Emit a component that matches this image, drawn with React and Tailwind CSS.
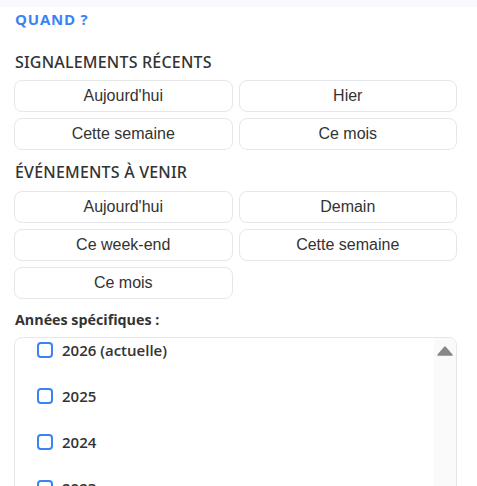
import React from 'react';

const recent = ["Aujourd'hui", 'Hier', 'Cette semaine', 'Ce mois'];
const upcoming = ["Aujourd'hui", 'Demain', 'Ce week-end', 'Cette semaine', 'Ce mois'];
const years = ['2026 (actuelle)', '2025', '2024', '2023', '2022'];

function ChipGrid({ items }) {
  return (
    <div className="grid grid-cols-2 gap-[6px]">
      {items.map((label, i) => (
        <button
          key={i}
          className="h-[32px] rounded-lg border border-[#e5e7eb] bg-white text-[16px] text-[#333] font-['Liberation_Sans',Arial,sans-serif]"
        >
          {label}
        </button>
      ))}
    </div>
  );
}

export default function App() {
  return (
    <div className="w-[477px] h-[486px] overflow-hidden bg-white text-[#333] font-['Open_Sans',sans-serif]">
      <div className="h-[7px] bg-[#f8f9fc]" />
      <div className="pl-[14px] pr-[20px]">
        <div className="mt-[2px] h-[20px] leading-[20px] pl-px text-[15px] font-bold text-[#3b82f6] tracking-[0.8px]">
          QUAND ?
        </div>

        <h3 className="mt-[22px] h-[22px] leading-[22px] pl-px text-[16px] font-medium tracking-[0.2px] font-['Noto_Sans',sans-serif]">
          SIGNALEMENTS RÉCENTS
        </h3>
        <div className="mt-[7px]">
          <ChipGrid items={recent} />
        </div>

        <h3 className="mt-[11px] h-[22px] leading-[22px] pl-px text-[16px] font-medium tracking-[0.2px] font-['Noto_Sans',sans-serif]">
          ÉVÉNEMENTS À VENIR
        </h3>
        <div className="mt-[8px]">
          <ChipGrid items={upcoming} />
        </div>

        <div className="mt-[11px] h-[20px] leading-[20px] pl-px text-[14.3px] font-bold">
          Années spécifiques :
        </div>

        <div className="mt-[7px] h-[200px] flex rounded-t-lg border border-[#e5e7eb] overflow-hidden">
          <div className="flex-1 flex flex-col gap-[30px] pt-[4px] pl-[22px]">
            {years.map((y) => (
              <label key={y} className="flex items-center gap-[9px] h-[16px]">
                <span className="w-[16px] h-[16px] rounded-[4px] border-2 border-[#3b82f6] bg-white" />
                <span className="text-[15px] font-semibold text-[#333] leading-[16px]">{y}</span>
              </label>
            ))}
          </div>
          <div className="w-[22px] bg-[#fafafa] flex justify-center pt-[8px]">
            <svg width="16" height="10" viewBox="0 0 16 10">
              <path d="M8 1 L15 9 L1 9 Z" fill="#888" stroke="#888" strokeWidth="1.5" strokeLinejoin="round" />
            </svg>
          </div>
        </div>
      </div>
    </div>
  );
}
